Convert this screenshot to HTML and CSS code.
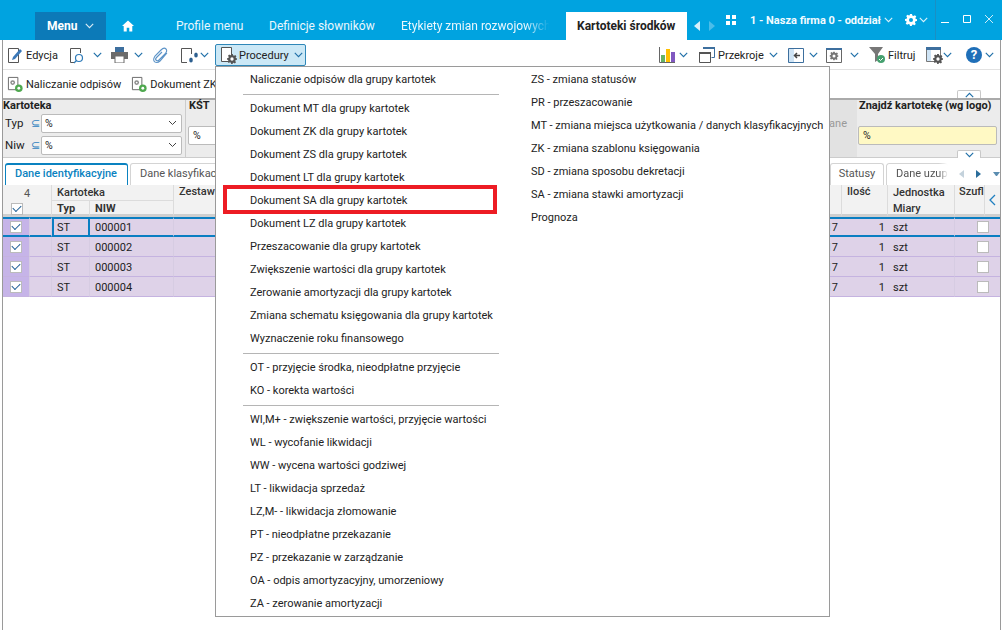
FILE: index.html
```html
<!DOCTYPE html>
<html lang="pl">
<head>
<meta charset="utf-8">
<title>Kartoteki środków</title>
<link rel="stylesheet" href="styles.css">
</head>
<body>
<svg class="defs" width="0" height="0">
  <defs>
    <symbol id="chev" viewBox="0 0 8 5"><path d="M.7.7 4 4l3.300-3.300" fill="none" stroke="#1f6fa8" stroke-width="1"/></symbol>
    <symbol id="gear" viewBox="0 0 12 12"><path d="M5 0h2l.3 1.600 1.200.5L9.900 1.200l1.400 1.400-.9 1.400.5 1.200L12 5v2l-1.600.3-.5 1.200.9 1.400-1.400 1.400-1.400-.9-1.200.5L7 12H5l-.3-1.600-1.200-.5-1.400.9L.7 9.400l.9-1.400-.5-1.200L0 7V5l1.600-.3.5-1.200-.9-1.400L2.600.7 4 1.600l.7-.3z" fill="currentColor"/><circle cx="6" cy="6" r="2" style="fill: var(--hole, #fff)"/></symbol>
    <symbol id="docgear" viewBox="0 0 18 18"><path d="M1.500 1.500h10v13h-10z" fill="#fff" stroke="#666"/><circle cx="6" cy="7" r="2.500" fill="#8a8a8a"/><circle cx="6" cy="7" r="1" fill="#fff"/><circle cx="12.500" cy="13" r="4" fill="#4fa84f"/><circle cx="12.500" cy="13" r="1.500" fill="#fff"/></symbol>
  </defs>
</svg>
<div class="app">
  <header class="topbar">
    <div class="menu-btn">Menu <svg class="chev light" width="9" height="6"><use href="#chev"/></svg></div>
    <svg class="home" width="12" height="12" viewBox="0 0 14 13"><path d="M7 0 0 6.500h2V13h3.500V8.500h3V13H12V6.500h2z" fill="#fff"/></svg>
    <nav class="tabs-top">
      <span class="ttab t1">Profile menu</span>
      <span class="ttab t2">Definicje słowników</span>
      <span class="ttab t3">Etykiety zmian rozwojowych</span>
    </nav>
    <div class="ttab-active">Kartoteki środków</div>
    <div class="tarrows"><span class="arr-l"></span><span class="arr-r"></span></div>
    <div class="apps"><i></i><i></i><i></i><i></i></div>
    <div class="firm">1 - Nasza firma 0 - oddział</div>
    <svg class="chev light firm-chev" width="9" height="6"><use href="#chev"/></svg>
    <svg class="top-gear" width="12" height="12"><use href="#gear"/></svg>
    <svg class="chev light gear-chev" width="9" height="6"><use href="#chev"/></svg>
    <div class="winbtns">
      <svg width="10" height="10" viewBox="0 0 10 10"><path d="M1 8.500h8" stroke="#fff"/></svg>
      <svg width="10" height="10" viewBox="0 0 10 10"><path d="M1.500 1.500h7v7h-7z" fill="none" stroke="#fff"/></svg>
      <svg width="10" height="10" viewBox="0 0 10 10"><path d="m1 1 8 8M9 1 1 9" stroke="#fff" opacity=".8"/></svg>
    </div>
  </header>

  <main class="content">
    <div class="toolbar">
      <div class="tb-left">
        <div class="tool w-edit"><svg width="16" height="17" viewBox="0 0 16 17"><path d="M1.500 1.500h10v14h-10z" fill="#fff" stroke="#555"/><path d="m5 13 1-3 7-8 2 2-7 8z" fill="#3b78b8"/></svg><span>Edycja</span></div>
        <div class="tool w-find"><svg width="17" height="17" viewBox="0 0 17 17"><path d="M5 15.500H1.500v-14h10V6" fill="none" stroke="#555"/><circle cx="10" cy="11" r="3.500" fill="#fff" stroke="#2d7ab8" stroke-width="1.200"/><path d="m7.500 13.500-2.500 2.500" stroke="#2d7ab8" stroke-width="1.300"/></svg><svg class="chev" width="9" height="6"><use href="#chev"/></svg></div>
        <div class="tool w-print"><svg width="17" height="16" viewBox="0 0 17 16"><path d="M4 0h9v5H4z" fill="#3d6f9e"/><path d="M0 5h17v7H0z" fill="#6b6b6b"/><path d="M4 9h9v7H4z" fill="#fff" stroke="#6b6b6b"/></svg><svg class="chev" width="9" height="6"><use href="#chev"/></svg></div>
        <div class="tool w-clip"><svg width="16" height="17" viewBox="0 0 16 17"><path d="M14 6 7 14c-2 2-5 2-6 0s0-3 1-5l6-6c2-2 4-2 5-1s1 3-1 5l-6 6c-1 1-2 1-3 0s0-2 1-3l5-5" fill="none" stroke="#5c93c7" stroke-width="1.100"/></svg></div>
        <div class="tool w-feet"><svg width="20" height="17" viewBox="0 0 20 17"><path d="M7 15.500H1.500v-14h10V7" fill="none" stroke="#555"/><ellipse cx="11" cy="13" rx="1.800" ry="2.500" fill="#2d5f8f"/><ellipse cx="16" cy="8" rx="1.800" ry="2.500" fill="#2d5f8f"/></svg><svg class="chev" width="9" height="6"><use href="#chev"/></svg></div>
        <div class="proc-btn"><svg width="18" height="18" viewBox="0 0 18 18"><path d="M1.500 1.500h10v14h-10z" fill="#fff" stroke="#555"/><g color="#555"><use href="#gear" x="7" y="8" width="10" height="10"/></g></svg><span>Procedury</span><svg class="chev" width="9" height="6"><use href="#chev"/></svg></div>
      </div>
      <div class="tb-right">
        <div class="tool r-chart"><svg width="16" height="16" viewBox="0 0 16 16"><path d="M.5 0v15.500H16" fill="none" stroke="#666"/><path d="M2 8h4v7H2z" fill="#66b266"/><path d="M7 2h4v13H7z" fill="#ffc000"/><path d="M12 5h4v10h-4z" fill="#8058c0"/></svg><svg class="chev" width="9" height="6"><use href="#chev"/></svg></div>
        <div class="tool r-prz"><svg width="16" height="16" viewBox="0 0 16 16"><path d="M4.500 .5h11v10h-3" fill="#fff" stroke="#3d6f9e"/><path d="M4 0h12v2H4z" fill="#3d6f9e"/><path d="M.5 5.500h11v10H.5z" fill="#fff" stroke="#555"/><path d="M0 5h12v2H0z" fill="#555"/></svg><span>Przekroje</span><svg class="chev" width="9" height="6"><use href="#chev"/></svg></div>
        <div class="tool r-panel"><svg width="16" height="15" viewBox="0 0 16 15"><path d="M.5.500h15v14H.5z" fill="#fff" stroke="#3d6f9e"/><path d="M1 1h5v13H1z" fill="#cfe4f5"/><path d="M12 7.500H7M9 5 6.500 7.500 9 10" fill="none" stroke="#444" stroke-width="1.500"/></svg><svg class="chev" width="9" height="6"><use href="#chev"/></svg></div>
        <div class="tool r-set"><svg width="16" height="15" viewBox="0 0 16 15"><path d="M.5.500h15v14H.5z" fill="#fff" stroke="#666"/><path d="M0 0h16v2H0z" fill="#3d6f9e"/><g color="#777"><use href="#gear" x="3.500" y="3.500" width="9" height="9"/></g></svg><svg class="chev" width="9" height="6"><use href="#chev"/></svg></div>
        <div class="tool r-filter"><svg width="16" height="16" viewBox="0 0 16 16"><path d="M0 0h14L9 7v6L6 15V7z" fill="#777"/><circle cx="12" cy="12" r="4" fill="#45a06f"/><path d="m10 12 1.500 1.500L14 11" fill="none" stroke="#fff"/></svg><span>Filtruj</span></div>
        <div class="tool r-view"><svg width="17" height="17" viewBox="0 0 17 17"><path d="M.5.500h14v14H.5z" fill="#fff" stroke="#777"/><path d="M0 0h15v3H0z" fill="#3d6f9e"/><path d="M1 3h4v11H1z" fill="#cfe4f5"/><g color="#555"><use href="#gear" x="7" y="7" width="10" height="10"/></g></svg><svg class="chev" width="9" height="6"><use href="#chev"/></svg></div>
        <div class="tool r-help"><span class="help">?</span><svg class="chev" width="9" height="6"><use href="#chev"/></svg></div>
      </div>
    </div>

    <div class="actions">
      <div class="act"><svg width="17" height="17"><use href="#docgear"/></svg><span>Naliczanie odpisów</span></div>
      <div class="act"><svg width="17" height="17"><use href="#docgear"/></svg><span>Dokument ZK</span></div>
      <div class="collapse up"><svg width="9" height="6" class="flip"><use href="#chev"/></svg></div>
    </div>

    <section class="filters">
      <div class="f-kart">
        <div class="f-title">Kartoteka</div>
        <div class="f-row"><label>Typ</label><span class="le">⊆</span><div class="select">%<svg width="9" height="6"><path d="M1 1l3.500 3.500L8 1" fill="none" stroke="#444"/></svg></div></div>
        <div class="f-row"><label>Niw</label><span class="le">⊆</span><div class="select">%<svg width="9" height="6"><path d="M1 1l3.500 3.500L8 1" fill="none" stroke="#444"/></svg></div></div>
      </div>
      <div class="f-kst">
        <div class="f-title">KŚT</div>
        <div class="input">%</div>
      </div>
      <div class="f-grey">ane</div>
      <div class="f-find">
        <div class="f-title">Znajdź kartotekę (wg logo)</div>
        <div class="input yellow">%</div>
        <div class="collapse down"><svg width="9" height="6"><use href="#chev"/></svg></div>
      </div>
    </section>

    <div class="tabs">
      <div class="tab active">Dane identyfikacyjne</div>
      <div class="tab wide">Dane klasyfikacyjne</div>
      <div class="tab status">Statusy</div>
      <div class="tab fade">Dane uzupełniające</div>
      <div class="tab-nav">
        <span class="nav-l"></span><span class="nav-r"></span><span class="nav-m"></span>
      </div>
    </div>

    <div class="grid">
      <div class="hd h-count"><span class="cnt">4</span><span class="chk on"></span></div>
      <div class="hd h-kart">Kartoteka</div>
      <div class="hd h-typ b">Typ</div>
      <div class="hd h-niw b">NIW</div>
      <div class="hd h-zest">Zestaw</div>
      <div class="hd h-date"></div>
      <div class="hd h-ilosc">Ilość</div>
      <div class="hd h-jedn">Jednostka<br>Miary</div>
      <div class="hd h-szuf">Szufl</div>
      <div class="hd h-arrow"><svg width="7" height="12" viewBox="0 0 7 12"><path d="M6 1 1 6l5 5" fill="none" stroke="#1f7fc0" stroke-width="1.300"/></svg></div>

      <div class="c sel mark"><span class="chk on"></span></div><div class="c sel"></div><div class="c sel cur">ST</div><div class="c sel">000001</div><div class="c sel mid"></div><div class="c sel right date">17</div><div class="c sel right">1</div><div class="c sel">szt</div><div class="c sel ctr"><span class="chk"></span></div>
      <div class="c mark"><span class="chk on"></span></div><div class="c"></div><div class="c">ST</div><div class="c">000002</div><div class="c mid"></div><div class="c right date">17</div><div class="c right">1</div><div class="c">szt</div><div class="c ctr"><span class="chk"></span></div>
      <div class="c mark"><span class="chk on"></span></div><div class="c"></div><div class="c">ST</div><div class="c">000003</div><div class="c mid"></div><div class="c right date">17</div><div class="c right">1</div><div class="c">szt</div><div class="c ctr"><span class="chk"></span></div>
      <div class="c mark"><span class="chk on"></span></div><div class="c"></div><div class="c">ST</div><div class="c">000004</div><div class="c mid"></div><div class="c right date">17</div><div class="c right">1</div><div class="c">szt</div><div class="c ctr"><span class="chk"></span></div>
    </div>
  </main>

  <div class="dropdown">
    <ul class="col col-left">
      <li>Naliczanie odpisów dla grupy kartotek</li>
      <li class="sep"></li>
      <li>Dokument MT dla grupy kartotek</li>
      <li>Dokument ZK dla grupy kartotek</li>
      <li>Dokument ZS dla grupy kartotek</li>
      <li>Dokument LT dla grupy kartotek</li>
      <li class="hl">Dokument SA dla grupy kartotek</li>
      <li>Dokument LZ dla grupy kartotek</li>
      <li>Przeszacowanie dla grupy kartotek</li>
      <li>Zwiększenie wartości dla grupy kartotek</li>
      <li>Zerowanie amortyzacji dla grupy kartotek</li>
      <li>Zmiana schematu księgowania dla grupy kartotek</li>
      <li>Wyznaczenie roku finansowego</li>
      <li class="sep"></li>
      <li>OT - przyjęcie środka, nieodpłatne przyjęcie</li>
      <li>KO - korekta wartości</li>
      <li class="sep"></li>
      <li>WI,M+ - zwiększenie wartości, przyjęcie wartości</li>
      <li>WL - wycofanie likwidacji</li>
      <li>WW - wycena wartości godziwej</li>
      <li>LT - likwidacja sprzedaż</li>
      <li>LZ,M- - likwidacja złomowanie</li>
      <li>PT - nieodpłatne przekazanie</li>
      <li>PZ - przekazanie w zarządzanie</li>
      <li>OA - odpis amortyzacyjny, umorzeniowy</li>
      <li>ZA - zerowanie amortyzacji</li>
    </ul>
    <ul class="col col-right">
      <li>ZS - zmiana statusów</li>
      <li>PR - przeszacowanie</li>
      <li>MT - zmiana miejsca użytkowania / danych klasyfikacyjnych</li>
      <li>ZK - zmiana szablonu księgowania</li>
      <li>SD - zmiana sposobu dekretacji</li>
      <li>SA - zmiana stawki amortyzacji</li>
      <li>Prognoza</li>
    </ul>
  </div>
</div>
</body>
</html>
```
FILE: styles.css
```css
*, *::before, *::after { box-sizing: border-box; }
html, body { margin: 0; height: 100%; }
body { font-family: Roboto, "Liberation Sans", sans-serif; font-size: 11px; color: #222; background: #fff; overflow: hidden; }
.defs { position: absolute; }
.app { position: relative; width: 1002px; height: 630px; overflow: hidden; }
svg { display: block; flex: none; }

.topbar { height: 40px; background: #00a3e0; display: flex; align-items: flex-end; color: #fff; padding-left: 35px; }
.menu-btn { width: 71px; height: 28px; background: #0c7ab8; display: flex; align-items: center; gap: 8px; padding-left: 12px; font-weight: 700; font-size: 12px; }
.chev.light { filter: brightness(0) invert(1); opacity: .85; }
.home { margin: 0 0 8px 16px; }
.tabs-top { width: 432px; height: 28px; display: flex; align-items: center; font-size: 12px; color: #eaf7fd; white-space: nowrap; padding-left: 42px; }
.ttab { flex: none; }
.t1 { width: 93px; }
.t2 { width: 132px; }
.t3 { width: 165px; -webkit-mask-image: linear-gradient(90deg, #000 75%, transparent 90%); mask-image: linear-gradient(90deg, #000 75%, transparent 90%); }
.ttab-active { width: 121px; height: 28px; background: #fff; color: #222; font-weight: 700; font-size: 12px; display: flex; align-items: center; padding-left: 11px; white-space: nowrap; }
.tarrows { width: 32px; height: 28px; display: flex; align-items: center; gap: 9px; padding-left: 7px; }
.arr-l, .arr-r { width: 0; height: 0; border-top: 5px solid transparent; border-bottom: 5px solid transparent; }
.arr-l { border-right: 6px solid #d7f0fb; }
.arr-r { border-left: 6px solid #4bbde9; }
.apps { width: 10px; height: 10px; display: grid; grid-template-columns: 4px 4px; gap: 2px; margin: 0 14px 15px 7px; }
.apps i { background: #fff; }
.firm { font-weight: 700; font-size: 11px; line-height: 13px; margin-bottom: 13px; color: #f2fbff; white-space: nowrap; width: 130px; }
.firm-chev { margin: 0 0 17px 4px; }
.top-gear { color: #fff; --hole: #00a3e0; margin: 0 0 14px 12px; }
.gear-chev { margin: 0 0 17px 2px; }
.winbtns { height: 40px; margin-left: 7px; width: 67px; border-left: 1px solid #1a8fc4; display: flex; align-items: flex-start; gap: 12px; padding: 14px 0 0 4px; align-self: flex-start; }

.content { height: 590px; margin: 0 1px 0 2px; border-left: 1px solid #9a9a9a; border-right: 1px solid #9a9a9a; }
.toolbar { height: 30px; display: flex; justify-content: space-between; border-bottom: 1px solid #e2e2e2; padding: 4px 0 0 4px; }
.tb-left, .tb-right { display: flex; align-items: flex-start; }
.tool { display: flex; align-items: center; height: 22px; gap: 4px; white-space: nowrap; font-size: 11px; }
.w-edit { width: 62px; gap: 3px; }
.w-find { width: 42px; gap: 7px; }
.w-print { width: 42px; gap: 6px; }
.w-clip { width: 27px; }
.w-feet { width: 35px; gap: 0; }
.proc-btn { width: 91px; height: 22px; background: #cbe8f6; border: 1px solid #2f87b8; border-radius: 2px; display: flex; align-items: center; gap: 1px; padding-left: 4px; font-size: 11px; }
.proc-btn .chev { margin-left: 4px; }
.r-chart { width: 40px; }
.r-prz { width: 89px; gap: 3px; }
.r-prz .chev { margin-left: 2px; }
.r-panel { width: 38px; gap: 5px; }
.r-set { width: 43px; gap: 8px; }
.r-filter { width: 57px; gap: 3px; }
.r-view { width: 40px; gap: 0; }
.r-help { width: 34px; gap: 3px; }
.help { width: 16px; height: 16px; border-radius: 50%; background: #1f6fb8; color: #fff; font-weight: 700; font-size: 13px; line-height: 16px; text-align: center; }

.actions { height: 28px; display: flex; align-items: center; gap: 10px; padding-left: 4px; position: relative; }
.act { display: flex; align-items: center; gap: 2px; font-size: 11px; white-space: nowrap; }
.collapse { position: absolute; width: 24px; height: 8px; border: 1px solid #c8c8c8; border-bottom: 0; background: #fff; display: flex; justify-content: center; align-items: center; border-radius: 2px 2px 0 0; }
.collapse.up { right: 19px; bottom: 0; }
.flip { transform: scaleY(-1); }

.filters { height: 60px; display: flex; background: #ececec; border-top: 2px solid #aaa; border-bottom: 1px solid #ccc; }
.f-title { font-weight: 700; font-size: 11px; line-height: 12px; }
.f-kart { width: 183px; border-right: 1px solid #ccc; }
.f-row { display: flex; align-items: center; height: 22px; padding-left: 2px; font-size: 11.500px; }
.f-row label { width: 26px; }
.le { width: 10px; color: #2f7fbf; font-size: 11px; }
.select { width: 141px; height: 19px; background: #fff; border: 1px solid #bbb; border-radius: 2px; display: flex; justify-content: space-between; align-items: center; padding: 0 4px 0 3px; font-size: 10.500px; }
.f-kst { width: 480px; padding-left: 3px; }
.input { height: 19px; background: #fff; border: 1px solid #bbb; border-radius: 2px; display: flex; align-items: center; padding-left: 4px; font-size: 10.500px; margin: 14px 0 0 -1px; }
.f-grey { flex: 1; background: #e2e2e2; color: #999; font-size: 11px; padding-top: 17px; text-align: right; padding-right: 10px; }
.f-find { width: 143px; position: relative; padding-left: 2px; }
.input.yellow { background: #fff9c4; width: 139px; }
.collapse.down { right: 19px; bottom: -1px; }

.tabs { height: 27px; display: flex; align-items: flex-end; padding-left: 2px; gap: 2px; }
.tab { height: 22px; border: 1px solid #d4d4d4; border-bottom: 0; border-radius: 3px 3px 0 0; display: flex; align-items: center; padding: 0 9px 2px; color: #555; font-size: 11px; white-space: nowrap; overflow: hidden; }
.tab.active { width: 123px; border: 1px solid #0a82c0; border-top-width: 2px; border-bottom: 0; color: #0a82c0; font-weight: 500; background: #fff; padding-bottom: 3px; }
.tab.wide { flex: 1; }
.tab.status { width: 54px; justify-content: center; padding: 0 0 2px; }
.tab.fade { width: 62px; border-right: 0; -webkit-mask-image: linear-gradient(90deg, #000 85%, transparent); mask-image: linear-gradient(90deg, #000 85%, transparent); }
.tab-nav { width: 50px; height: 22px; display: flex; align-items: center; gap: 12px; padding-left: 9px; }
.nav-l, .nav-r { width: 0; height: 0; border-top: 4px solid transparent; border-bottom: 4px solid transparent; }
.nav-l { border-right: 5px solid #c4d2dc; }
.nav-r { border-left: 5px solid #2b6d9b; }
.nav-m { width: 7px; height: 4px; border-left: 3.500px solid transparent; border-right: 3.500px solid transparent; border-top: 4px solid #5b8db0; }

.grid { display: grid; grid-template-columns: 27px 22px 38px 84px 501px 167px 46px 67px 30px 15px; grid-template-rows: 16px 16px repeat(4, 20px); background: #fff; }
.hd { background: #f2f2f2; border-right: 1px solid #dcdcdc; border-bottom: 3px solid #cfcfcf; font-size: 11px; font-weight: 500; color: #333; padding: 0 0 0 5px; }
.h-count { grid-column: 1 / span 2; grid-row: 1 / span 2; display: flex; flex-direction: column; color: #555; padding: 2px 0 0 8px; font-weight: 400; gap: 3px; }
.cnt { display: block; text-align: center; padding-right: 8px; }
.h-kart { grid-column: 3 / span 2; grid-row: 1; border-bottom: 1px solid #dcdcdc; padding-top: 1px; }
.h-typ { grid-column: 3; grid-row: 2; padding-top: 1px; }
.h-niw { grid-column: 4; grid-row: 2; padding-top: 1px; }
.h-zest { grid-column: 5; grid-row: 1 / span 2; overflow: hidden; }
.h-date { grid-column: 6; grid-row: 1 / span 2; }
.h-ilosc { grid-column: 7; grid-row: 1 / span 2; }
.h-jedn { grid-column: 8; grid-row: 1 / span 2; line-height: 16px; }
.h-szuf { grid-column: 9; grid-row: 1 / span 2; overflow: hidden; white-space: nowrap; padding-left: 4px; }
.h-arrow { grid-column: 10; grid-row: 1 / span 2; border-right: 0; padding: 9px 0 0 4px; }
.hd.b { font-weight: 700; }
.c { background: #ded2e8; border-bottom: 1px solid #c5b3e0; border-right: 1px solid #d6cce2; display: flex; align-items: center; padding: 1px 0 0 5px; font-size: 11px; white-space: nowrap; }
.c.mid { border-right: 0; }
.c.mark { background: #c6b4e8; justify-content: center; padding: 1px 0 0; }
.c.right { justify-content: flex-end; padding: 1px 3px 0 0; border-right: 0; }
.c.date { padding-right: 4px; }
.c.ctr { grid-column: 9 / span 2; justify-content: flex-end; padding: 1px 11px 0 0; border-right: 0; }
.c.sel { border-top: 2px solid #0a7ec2; border-bottom: 2px solid #0a7ec2; padding-top: 0; }
.c.cur { border: 2px solid #0a7ec2; padding-left: 3px; }
.chk { display: block; width: 12px; height: 12px; background: #fff; border: 1px solid #bbb; position: relative; flex: none; }
.chk.on::after { content: ""; position: absolute; left: 1px; top: 1px; width: 8px; height: 5px; border-left: 1.500px solid #1f5f96; border-bottom: 1.500px solid #1f5f96; transform: rotate(-45deg); }

.dropdown { position: absolute; left: 215px; top: 66px; width: 615px; height: 551px; background: #fff; border: 1px solid #9a9a9a; display: flex; padding-top: 1px; }
.col { list-style: none; margin: 0; padding: 0; font-size: 11px; color: #222; }
.col li { height: 23px; line-height: 23px; white-space: nowrap; position: relative; }
.col-left { width: 315px; }
.col-left li { padding-left: 34px; }
.col-left li.sep { height: 6px; padding: 0; }
.col-left li.sep::after { content: ""; position: absolute; left: 27px; width: 256px; top: 3px; height: 1px; background: #b5b5b5; }
.col-left li.hl::after { content: ""; position: absolute; left: 7px; top: -4px; width: 274px; height: 29px; border: 4px solid #ed1c24; }
```
